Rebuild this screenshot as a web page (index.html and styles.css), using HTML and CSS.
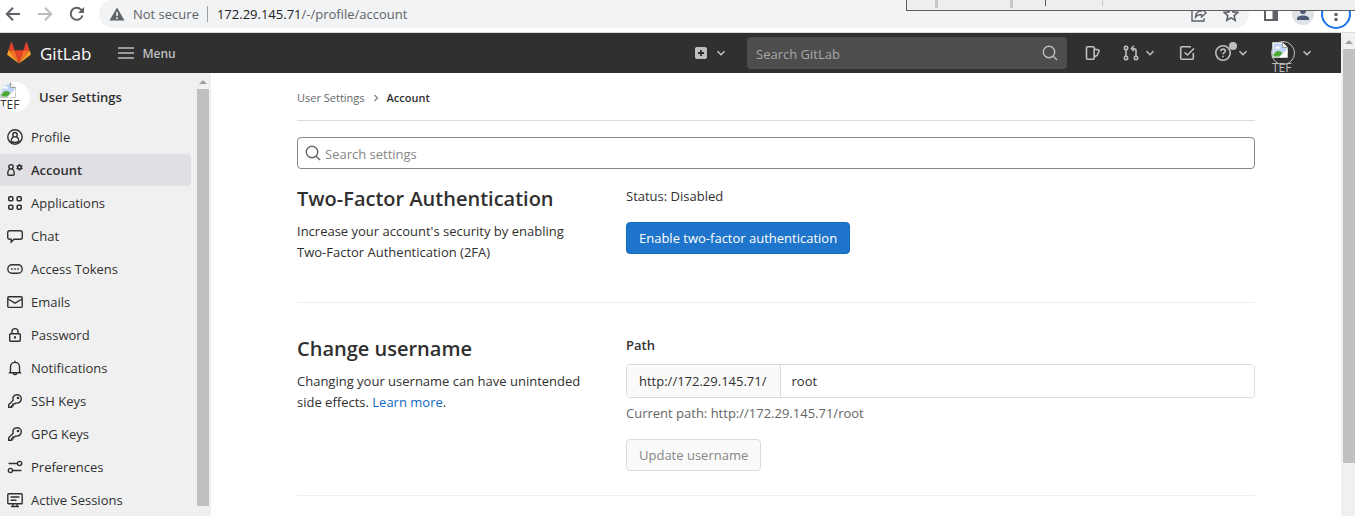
FILE: index.html
```html
<!DOCTYPE html>
<html lang="en">
<head>
<meta charset="utf-8">
<title>Account · User Settings · GitLab</title>
<link rel="stylesheet" href="styles.css">
</head>
<body>
<svg class="sprite" aria-hidden="true">
  <symbol id="chevron" viewBox="0 0 16 16"><path class="thick" d="M4.500 6.200 8 9.700l3.500-3.500"/></symbol>
  <symbol id="search" viewBox="0 0 16 16"><circle cx="7" cy="7" r="5.700"/><path d="m11.200 11.200 3.800 3.800"/></symbol>
  <symbol id="person" viewBox="0 0 16 16"><circle cx="8" cy="8" r="7.200"/><circle cx="8" cy="5.700" r="2.200"/><path d="M4 13.800v-1.600c0-2.200 1.100-3.700 2.500-4.600M12 13.800v-1.600c0-2.200-1.100-3.700-2.500-4.600M4.300 12.300c2 1.300 5.400 1.300 7.400 0"/></symbol>
  <symbol id="account" viewBox="0 0 16 16"><circle cx="4" cy="4.800" r="2.200"/><path d="M2.600 7C1.300 8 .8 9.300.8 11v1.200c0 .7.500 1.100 1.200 1.100h4c.7 0 1.200-.4 1.200-1.100V11c0-1.700-.5-3-1.800-4"/><circle class="thick" cx="12.500" cy="5.300" r="1.800"/><path class="thick" d="M12.500 2v1.500M12.500 7.100v1.500M9.600 3.700l1.300.7M14.100 6.200l1.300.7M9.600 6.900l1.300-.7M14.100 4.400l1.300-.7"/></symbol>
  <symbol id="apps" viewBox="0 0 16 16"><rect class="thick" x="1.800" y="1.800" width="4" height="4" rx="1"/><rect class="thick" x="10.200" y="1.800" width="4" height="4" rx="1"/><rect class="thick" x="1.800" y="10.200" width="4" height="4" rx="1"/><rect class="thick" x="10.200" y="10.200" width="4" height="4" rx="1"/></symbol>
  <symbol id="chat" viewBox="0 0 16 16"><path d="M2.700 2.700h10.600c1.200 0 2 .8 2 2v4.600c0 1.200-.8 2-2 2H7L4.200 14v-2.700H2.700c-1.200 0-2-.8-2-2V4.700c0-1.200.8-2 2-2z"/></symbol>
  <symbol id="token" viewBox="0 0 16 16"><rect x=".8" y="3.700" width="14.400" height="8.600" rx="4.200"/><path class="thick" d="M4.200 8h1.600M7.200 8h1.600M10.200 8h1.600"/></symbol>
  <symbol id="mail" viewBox="0 0 16 16"><rect x=".8" y="2.800" width="14.400" height="10.600" rx="1"/><path d="m1 5 7 4.200L15 5"/></symbol>
  <symbol id="lock" viewBox="0 0 16 16"><rect x="2.700" y="6.700" width="10.600" height="7.600" rx="1"/><path d="M5 6.700V4.600c0-4 6-4 6 0v2.100"/><path class="bold" d="M8 9.300v2.200"/></symbol>
  <symbol id="bell" viewBox="0 0 16 16"><path d="M8 .8v1.400M1.800 12.700h12.400M3.500 12.700V7c0-6.200 9-6.200 9 0v5.700M6.300 13.300c.4 1.800 3 1.800 3.400 0"/></symbol>
  <symbol id="key" viewBox="0 0 16 16"><path d="M6.200 7.200C5 4 7.200 1.700 10 1.700c2.500 0 4.300 1.800 4.300 4.100 0 2.700-2.400 4.900-5.500 4.100L7.500 11H6v1.700H4.700v1.600H1.700v-2.500z"/><circle cx="11" cy="5" r=".6"/></symbol>
  <symbol id="prefs" viewBox="0 0 16 16"><circle cx="12.600" cy="4.500" r="2.100"/><circle cx="3.400" cy="11.500" r="2.100"/><path d="M1.500 4.500h9M5.500 11.500h9"/></symbol>
  <symbol id="monitor" viewBox="0 0 16 16"><rect x=".8" y="1.800" width="14.400" height="10" rx=".8"/><path d="M3.500 5h9M3.500 8.200h6M6 12v2.500M10 12v2.500M4 14.500h8"/></symbol>
  <symbol id="broken" viewBox="0 0 16 16"><path fill="#fff" stroke="#c4c4c4" stroke-width="1" d="M.5.5h10l5 5v10H.5z"/><path fill="#bfd5f5" stroke="none" d="M1.500 1.500h8.500V6h4.500v2l-6.500 6.500H1.500z"/><path fill="#fff" stroke="none" d="M3 6.500c0-1 1-2 2-1.500C6 3.500 8 4.500 8 6.500z"/><path fill="#4eaa35" stroke="none" d="M1.500 14.500v-2c3-4.500 6-4.500 9-1.500l-3 3.500z"/><path fill="#fff" stroke="none" d="m8 15.500 7.500-7.500v2.500l-5 5z"/><path fill="#f4f4f4" stroke="#9b9b9b" stroke-width="1" d="M10.500.5v5h5"/></symbol>
</svg>

<div class="browser">
  <button class="tool" aria-label="Back"><svg viewBox="0 0 16 16"><path class="bold" d="M15 8H2M8 1.800 1.800 8 8 14.200"/></svg></button>
  <button class="tool faded" aria-label="Forward"><svg viewBox="0 0 16 16"><path class="bold" d="M1 8h13M8 1.800 14.200 8 8 14.200"/></svg></button>
  <button class="tool" aria-label="Reload"><svg viewBox="0 0 16 16"><path class="bold" d="M13.500 9.500A6 6 0 1 1 12.200 3.800L14 5.600"/><path fill="currentColor" stroke="none" d="M15 1v6H9z"/></svg></button>
  <div class="address">
    <svg class="warning" viewBox="0 0 16 16"><path fill="#5f6368" stroke="none" d="M8 1.500 15.500 14.500H.5z"/><path stroke="#f1f3f4" stroke-width="1.600" d="M8 6v4M8 11.300v1.600"/></svg>
    <span class="insecure">Not secure</span>
    <span class="url"><b>172.29.145.71</b>/-/profile/account</span>
    <button class="tool share" aria-label="Share"><svg viewBox="0 0 16 16"><path d="M3.500 3H1v12h12v-3M4.500 11c.3-4 2.500-6 6-6V2.500L15 7l-4.500 4V8.500c-2.500 0-4.500.6-6 2.500z"/></svg></button>
    <button class="tool" aria-label="Bookmark"><svg viewBox="0 0 16 16"><path class="thick" d="m8 1.500 2 4.400 4.800.5-3.600 3.200 1 4.700L8 11.900l-4.200 2.400 1-4.700L1.200 6.400 6 5.900z"/></svg></button>
  </div>
  <button class="tool" aria-label="Side panel"><svg viewBox="0 0 16 16"><path class="bold" d="M2 2h12v12H2z"/><path fill="currentColor" stroke="none" d="M9.500 2H14v12H9.500z"/></svg></button>
  <button class="tool profile" aria-label="Browser profile"><svg viewBox="0 0 16 16"><path fill="currentColor" stroke="none" d="M8 2a3 3 0 1 1 0 6 3 3 0 0 1 0-6zM2 14v-1.500c0-4 12-4 12 0V14z"/></svg></button>
  <button class="tool more" aria-label="Browser menu"><svg viewBox="0 0 16 16"><path fill="currentColor" stroke="none" d="M6.500 2h3v3h-3zM6.500 7h3v3h-3zM6.500 12h3v3h-3z"/></svg></button>
  <div class="dock"><i></i><i></i><i class="dark"></i><i class="thin"></i></div>
</div>

<div class="window">
  <div class="page">
    <header class="navbar">
      <a class="brand" href="#">
        <svg viewBox="0 0 24 24"><path fill="#e24329" d="m12 22.500 4.400-13.300H7.600z"/><path fill="#fc6d26" d="M12 22.500 7.600 9.200H1.500zM12 22.500l4.400-13.300h6.100z"/><path fill="#fca326" d="M1.500 9.200.2 13c-.1.400 0 .8.300 1.100L12 22.500zM22.500 9.200l1.300 3.800c.1.400 0 .8-.3 1.100L12 22.500z"/><path fill="#e24329" d="M1.500 9.200h6.100L5 1.300c-.2-.5-.7-.5-.9 0zM22.500 9.200h-6.100L19 1.300c.2-.5.7-.5.9 0z"/></svg>
        <span>GitLab</span>
      </a>
      <button class="menu"><svg viewBox="0 0 16 16"><path d="M0 3h16M0 8h16M0 13h16"/></svg>Menu</button>
      <button class="nav-item create" aria-label="Create new"><svg viewBox="0 0 16 16"><rect x="2" y="2" width="12" height="12" rx="2" fill="currentColor" stroke="none"/><path stroke="#303030" stroke-width="1.800" d="M8 5v6M5 8h6"/></svg><svg><use href="#chevron"/></svg></button>
      <label class="global-search"><input type="text" placeholder="Search GitLab" aria-label="Search GitLab"><svg><use href="#search"/></svg></label>
      <a class="nav-item issues" href="#" aria-label="Issues"><svg viewBox="0 0 16 16"><path class="thick" d="M2.500 1.800h5.700c.6 0 1 .4 1 1v10.400c0 .6-.4 1-1 1H2.500c-.6 0-1-.4-1-1V2.800c0-.6.4-1 1-1zM9.500 4l4 1c.5.200.8.500.6 1L12 10.500l-2.500 1.300"/></svg></a>
      <button class="nav-item merges" aria-label="Merge requests"><svg viewBox="0 0 16 16"><g class="thick"><circle cx="3" cy="3" r="1.700"/><circle cx="3" cy="13" r="1.700"/><circle cx="13" cy="13" r="1.700"/><path d="M3 5v6M13 11V5.500C13 4 12.200 3.500 10 3.500M10.800 1 8.500 3.500 10.800 6"/></g></svg><svg><use href="#chevron"/></svg></button>
      <a class="nav-item todo" href="#" aria-label="To-Do List"><svg viewBox="0 0 16 16"><path class="thick" d="M14.300 8v5.300c0 .6-.4 1-1 1H2.700c-.6 0-1-.4-1-1V2.700c0-.6.4-1 1-1H12M5.500 7.500l3 2.500L15 3.500"/></svg></a>
      <button class="nav-item help" aria-label="Help"><svg viewBox="0 0 16 16"><g class="thick"><circle cx="8" cy="8" r="7.200"/><path d="M5.800 6.300c0-3 4.500-2.800 4.500-.2 0 1.600-2.300 1.600-2.300 3.200M8 10.800v1.500"/></g></svg><svg><use href="#chevron"/></svg></button>
      <button class="nav-item user" aria-label="Account menu"><span class="avatar"><svg><use href="#broken"/></svg><span>TEF</span></span><svg><use href="#chevron"/></svg></button>
    </header>

    <div class="body">
      <aside class="sidebar">
        <nav>
          <a class="context" href="#"><span class="avatar"><svg><use href="#broken"/></svg><span>TEF</span></span>User Settings</a>
          <a class="item" href="#"><svg><use href="#person"/></svg>Profile</a>
          <a class="item active" href="#"><svg><use href="#account"/></svg>Account</a>
          <a class="item" href="#"><svg><use href="#apps"/></svg>Applications</a>
          <a class="item" href="#"><svg><use href="#chat"/></svg>Chat</a>
          <a class="item" href="#"><svg><use href="#token"/></svg>Access Tokens</a>
          <a class="item" href="#"><svg><use href="#mail"/></svg>Emails</a>
          <a class="item" href="#"><svg><use href="#lock"/></svg>Password</a>
          <a class="item" href="#"><svg><use href="#bell"/></svg>Notifications</a>
          <a class="item" href="#"><svg><use href="#key"/></svg>SSH Keys</a>
          <a class="item" href="#"><svg><use href="#key"/></svg>GPG Keys</a>
          <a class="item" href="#"><svg><use href="#prefs"/></svg>Preferences</a>
          <a class="item" href="#"><svg><use href="#monitor"/></svg>Active Sessions</a>
        </nav>
        <div class="scrollbar side"><span class="arrow"></span><span class="thumb"></span></div>
      </aside>

      <main>
        <div class="crumbs"><a href="#">User Settings</a><svg viewBox="0 0 8 8"><path d="m2.500 1 3 3-3 3"/></svg><b>Account</b></div>
        <label class="settings-search"><svg><use href="#search"/></svg><input type="text" placeholder="Search settings" aria-label="Search settings"></label>
        <section>
          <div>
            <h4>Two-Factor Authentication</h4>
            <p>Increase your account's security by enabling Two-Factor Authentication (2FA)</p>
          </div>
          <div>
            <p class="status">Status: Disabled</p>
            <button class="btn confirm">Enable two-factor authentication</button>
          </div>
        </section>
        <section>
          <div>
            <h4>Change username</h4>
            <p>Changing your username can have unintended side effects. <a href="#">Learn more</a>.</p>
          </div>
          <form>
            <label class="path-label" for="path">Path</label>
            <div class="group"><span>http://172.29.145.71/</span><input id="path" type="text" value="root"></div>
            <p class="hint">Current path: http://172.29.145.71/root</p>
            <button class="btn" type="button" disabled>Update username</button>
          </form>
        </section>
      </main>
    </div>
  </div>
  <div class="scrollbar outer"><span class="arrow"></span><span class="thumb"></span></div>
</div>
</body>
</html>
```
FILE: styles.css
```css
* { box-sizing: border-box; }

body {
  margin: 0;
  height: 100vh;
  overflow: hidden;
  display: flex;
  flex-direction: column;
  background: #fff;
  color: #303030;
  font: 13px/21px "Open Sans", "Noto Sans", sans-serif;
}

button, input { font: inherit; color: inherit; }
button { padding: 0; border: 0; background: none; }
input { min-width: 0; outline: 0; }
a { color: inherit; text-decoration: none; }
p, h4 { margin: 0; }
svg { width: 16px; height: 16px; flex: none; fill: none; stroke: currentColor; stroke-width: 1.4; }
.sprite { display: none; }
.thick { stroke-width: 1.6; }
.bold { stroke-width: 2; }

/* Browser toolbar */
.browser {
  position: relative;
  flex: none;
  display: flex;
  align-items: center;
  height: 33px;
  padding: 0 4px 4px 5px;
  border-bottom: 1px solid #dadce0;
  color: #5f6368;
}
.tool { display: flex; margin-right: 16px; }
.faded { color: #babcbe; }
.address {
  flex: 1;
  display: flex;
  align-items: center;
  height: 28px;
  margin: 0 14px 0 -2px;
  padding: 0 10px;
  border-radius: 14px;
  background: #f1f3f4;
}
.address .tool:last-child { margin: 0; }
.insecure { margin-left: 8px; padding-right: 8px; border-right: 1px solid #9aa0a6; line-height: 16px; }
.url { flex: 1; margin-left: 9px; }
.url b { font-weight: 400; color: #202124; }
.profile { margin: 0 7px 0 -3px; padding: 3px; border-radius: 50%; background: #dee1e6; color: #4a5a75; }
.more { margin: 0; padding: 5px; border: 2px solid #1a73e8; border-radius: 50%; }
.dock {
  position: absolute;
  top: 0;
  right: 0;
  width: 449px;
  height: 11px;
  display: flex;
  padding-left: 28px;
  border: solid #5e5e5e;
  border-width: 0 0 1px 1px;
  background: #eee;
}
.dock i { width: 3px; height: 8px; margin-right: 72px; background: #c8c8c8; }
.dock .dark { width: 1px; height: 6px; margin: 0 56px 0 -40px; background: #555; }
.dock .thin { width: 1px; height: 6px; margin: 0; }

.window { flex: 1; min-height: 0; display: flex; }
.page { flex: 1; min-width: 0; display: flex; flex-direction: column; }

/* Scrollbars */
.scrollbar {
  flex: none;
  display: flex;
  flex-direction: column;
  align-items: center;
  width: 14px;
  padding: 7px 0 0 2px;
  background: #f0f0f0;
}
.arrow { border: solid transparent; border-width: 0 4px 4px; border-bottom-color: #a0a0a0; }
.thumb { align-self: stretch; flex: 1; margin-top: 5px; background: #c0c0c0; }
.outer .thumb { flex: none; height: 87%; }
.side { padding: 7px 2px 10px 0; }

/* Top navigation */
.navbar {
  flex: none;
  display: flex;
  align-items: center;
  height: 40px;
  padding: 0 26px 0 7px;
  background: #303030;
  color: #bfbfbf;
}
.brand { display: flex; align-items: center; gap: 9px; color: #fff; font-size: 17px; }
.brand svg { width: 24px; height: 24px; stroke: none; }
.menu { display: flex; align-items: center; gap: 8px; margin-left: 27px; font-size: 12px; font-weight: 600; }
.nav-item { position: relative; display: flex; align-items: center; gap: 3px; margin-left: 20px; }
.create { margin-left: auto; gap: 4px; }
.global-search {
  display: flex;
  align-items: center;
  width: 320px;
  height: 32px;
  margin-left: 18px;
  padding: 0 9px;
  border-radius: 4px;
  background: #4d4d4d;
}
.global-search input { flex: 1; padding: 2px 0 0; border: 0; background: none; }
.global-search input::placeholder { color: #a8a8a8; }
.issues { margin-left: 18px; }
.merges { margin-left: 22px; }
.help { gap: 4px; }
.help::after { content: ""; position: absolute; left: 14px; top: -3px; width: 8px; height: 8px; border-radius: 50%; background: #bfbfbf; }
.todo { margin-left: 21px; }
.user { gap: 4px; }
.user .avatar { display: flex; flex-direction: column; align-items: flex-start; width: 24px; height: 24px; border: 1px solid #bfbfbf; border-radius: 50%; font-size: 12px; line-height: 20px; }

/* Sidebar */
.body { position: relative; flex: 1; min-height: 0; display: flex; background: #fff; }
.sidebar { flex: none; display: flex; width: 211px; background: #f0f0f0; overflow: hidden; }
.sidebar nav { flex: 1; padding-right: 6px; }
.context { display: flex; align-items: center; gap: 9px; height: 48px; font-weight: 600; }
.context .avatar { width: 30px; height: 30px; overflow: hidden; border-radius: 50%; background: #fff; font-weight: 400; font-size: 12px; line-height: 14px; }
.context .avatar svg { display: block; }
.item { display: flex; align-items: center; gap: 8px; height: 32px; margin-bottom: 1px; padding-left: 7px; border-radius: 0 4px 4px 0; }
.active { background: #dfdfe4; font-weight: 600; }

/* Settings content */
main { flex: 1; min-width: 0; padding: 0 86px; overflow: hidden; }
.crumbs { display: flex; align-items: center; gap: 7px; height: 48px; padding-top: 2px; border-bottom: 1px solid #dbdbdb; font-size: 11px; }
.crumbs a { color: #666; }
.crumbs svg { width: 8px; height: 8px; color: #888; }
.crumbs b { font-weight: 600; }
.settings-search { display: flex; align-items: center; gap: 4px; height: 32px; margin-top: 16px; padding: 0 7px; border: 1px solid #868686; border-radius: 4px; color: #666; }
.settings-search input { flex: 1; padding: 2px 0 0; border: 0; }
.settings-search input::placeholder { color: #868686; }

section {
  display: grid;
  grid-template-columns: minmax(0, 299fr) minmax(0, 629fr);
  gap: 30px;
  padding: 32px 0 24px;
  border-bottom: 1px solid #eee;
}
.settings-search + section { padding: 16px 0 39px; }
h4 { margin: 2px 0 10px; font-size: 20px; line-height: 24px; font-weight: 600; }
section > div p a { color: #1068bf; }
.status { margin: 1px 0 15px; }
.btn { height: 32px; padding: 0 12px; border: 1px solid #dbdbdb; border-radius: 4px; background: #fafafa; color: #868686; }
.confirm { border-color: #1068bf; background: #1f75cb; color: #fff; }
.path-label { display: block; margin-bottom: 8px; font-weight: 600; }
.group { display: flex; height: 34px; border: 1px solid #dbdbdb; border-radius: 4px; overflow: hidden; }
.group span { display: flex; align-items: center; padding: 0 13px 0 12px; border-right: 1px solid #dbdbdb; background: #fafafa; }
.group input { flex: 1; padding: 0 11px; border: 0; }
.hint { margin: 5px 0 15px; color: #666; }
```
